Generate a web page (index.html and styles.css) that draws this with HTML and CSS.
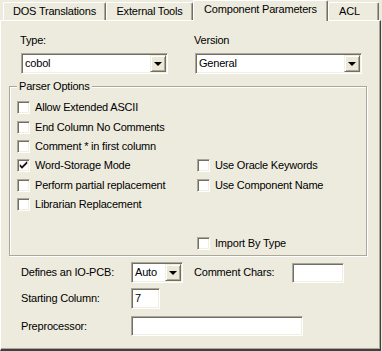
FILE: index.html
```html
<!DOCTYPE html>
<html lang="en">
<head>
    <meta charset="UTF-8">
    <title>Component Parameters</title>
    <link rel="stylesheet" href="styles.css">
</head>
<body>
    <div class="tabs">
        <div class="tab tab-dos">DOS Translations</div>
        <div class="tab tab-ext">External Tools</div>
        <div class="tab tab-comp active">Component Parameters</div>
        <div class="tab tab-acl">ACL</div>
    </div>

    <div class="pane">
        <!-- Type / Version -->
        <div class="top-row">
            <div class="field field-type">
                <div class="label">Type:</div>
                <div class="combo">
                    <span class="combo-text">cobol</span>
                    <span class="drop"><span class="arrow"></span></span>
                </div>
            </div>
            <div class="field field-version">
                <div class="label">Version</div>
                <div class="combo">
                    <span class="combo-text">General</span>
                    <span class="drop"><span class="arrow"></span></span>
                </div>
            </div>
        </div>

        <!-- Parser Options -->
        <fieldset class="group">
            <legend>Parser Options</legend>
            <div class="options">
                <div class="check" style="grid-area: 1 / 1"><span class="box"></span>Allow Extended ASCII</div>
                <div class="check" style="grid-area: 2 / 1"><span class="box"></span>End Column No Comments</div>
                <div class="check" style="grid-area: 3 / 1"><span class="box"></span>Comment * in first column</div>
                <div class="check" style="grid-area: 4 / 1">
                    <span class="box">
                        <svg width="11" height="11" viewBox="0 0 11 11"><path d="M2 4.5 L4 6.5 L9 1.5 L9 3.5 L4 8.5 L2 6.5 Z" fill="#000" stroke="#000" stroke-width="0.4"/></svg>
                    </span>Word-Storage Mode
                </div>
                <div class="check" style="grid-area: 5 / 1"><span class="box"></span>Perform partial replacement</div>
                <div class="check" style="grid-area: 6 / 1"><span class="box"></span>Librarian Replacement</div>
                <div class="check" style="grid-area: 4 / 2"><span class="box"></span>Use Oracle Keywords</div>
                <div class="check" style="grid-area: 5 / 2"><span class="box"></span>Use Component Name</div>
                <div class="check" style="grid-area: 8 / 2"><span class="box"></span>Import By Type</div>
            </div>
        </fieldset>

        <!-- Bottom fields -->
        <div class="bottom">
            <div class="row row-pcb">
                <div class="row-label">Defines an IO-PCB:</div>
                <div class="combo combo-auto">
                    <span class="combo-text">Auto</span>
                    <span class="drop"><span class="arrow"></span></span>
                </div>
                <div class="row-label comment-label">Comment Chars:</div>
                <div class="textbox tb-comment"></div>
            </div>
            <div class="row row-start">
                <div class="row-label">Starting Column:</div>
                <div class="textbox tb-start">7</div>
            </div>
            <div class="row row-pre">
                <div class="row-label">Preprocessor:</div>
                <div class="textbox tb-pre"></div>
            </div>
        </div>
    </div>
</body>
</html>
```

FILE: styles.css
```css
* {
    margin: 0;
    padding: 0;
    box-sizing: border-box;
}

body {
    width: 382px;
    height: 351px;
    overflow: hidden;
    background: #edebdd;
    font-family: 'Liberation Sans', Arial, sans-serif;
    font-size: 11px;
    line-height: 13px;
    letter-spacing: -0.2px;
    color: #000;
}

/* ---------- tabs ---------- */

.tabs {
    display: flex;
    align-items: flex-end;
    height: 20px;
    padding-left: 3px;
}

.tab {
    height: 18px;
    padding-top: 2px;
    text-align: center;
    white-space: nowrap;
    background: #edebdd;
    border-top: 1px solid #fff;
    border-left: 1px solid #fff;
    border-right: 1px solid #716f64;
    border-radius: 2px 2px 0 0;
    box-shadow: inset -1px 0 0 #aca899;
}

.tab-dos { width: 103px; }
.tab-ext { width: 87px; }
.tab-comp { width: 135px; }
.tab-acl {
    width: 51px;
    text-align: left;
    padding-left: 10px;
}

.tab.active {
    position: relative;
    z-index: 1;
    height: 21px;
    margin-bottom: -1px;
    padding-top: 2px;
}

/* ---------- pane ---------- */

.pane {
    height: 331px;
    width: 381px;
    border-top: 1px solid #fff;
    border-left: 1px solid #fff;
    border-right: 1px solid #404040;
    border-bottom: 2px solid #404040;
    box-shadow: inset -1px -1px 0 #aca899;
}

.top-row {
    display: flex;
    padding: 13px 0 0 19px;
}

.field-type { width: 148px; }
.field-version {
    width: 168px;
    margin-left: 26px;
}

.label {
    height: 13px;
    margin-bottom: 6px;
}

/* ---------- combo / textbox ---------- */

.combo,
.textbox {
    position: relative;
    display: flex;
    align-items: center;
    height: 21px;
    background: #fff;
    border-top: 1px solid #aca899;
    border-left: 1px solid #aca899;
    border-right: 1px solid #fff;
    border-bottom: 1px solid #fff;
    box-shadow: inset 1px 1px 0 #716f64, inset -1px -1px 0 #f1efe2;
}

.field .combo { margin-left: 1px; }

.combo-text,
.textbox {
    padding-left: 3px;
}

.combo-text { flex: 1; }

.drop {
    display: flex;
    align-items: center;
    justify-content: center;
    width: 16px;
    height: 17px;
    margin-right: 1px;
    background: #ece9d8;
    border-top: 1px solid #f1efe2;
    border-left: 1px solid #f1efe2;
    border-right: 1px solid #716f64;
    border-bottom: 1px solid #716f64;
    box-shadow: inset 1px 1px 0 #fff, inset -1px -1px 0 #aca899;
}

.arrow {
    width: 0;
    height: 0;
    border-left: 4px solid transparent;
    border-right: 4px solid transparent;
    border-top: 4px solid #000;
    margin-top: 1px;
}

/* ---------- group box ---------- */

.group {
    margin: 6px 13px 0 8px;
    padding: 5px 0 3px 7px;
    border: 1px solid #aca899;
    box-shadow: inset 1px 1px 0 #fff, 1px 1px 0 #fff;
    height: 176px;
}

.group legend {
    padding: 0 2px 0 2px;
    margin-left: 0;
    background: #edebdd;
    line-height: 13px;
}

.options {
    display: grid;
    grid-template-columns: 180px 1fr;
    grid-template-rows: repeat(8, 19.4px);
}

.check {
    display: flex;
    align-items: center;
    white-space: nowrap;
}

.box {
    display: flex;
    align-items: center;
    justify-content: center;
    width: 13px;
    height: 13px;
    margin-right: 5px;
    background: #fff;
    border-top: 1px solid #aca899;
    border-left: 1px solid #aca899;
    border-right: 1px solid #fff;
    border-bottom: 1px solid #fff;
    box-shadow: inset 1px 1px 0 #716f64, inset -1px -1px 0 #f1efe2;
}

/* ---------- bottom rows ---------- */

.bottom {
    padding: 6px 0 0 20px;
}

.row {
    display: flex;
    align-items: center;
}

.row-start { margin-top: 5px; }
.row-pre { margin-top: 7px; }

.row-label {
    width: 110px;
    white-space: nowrap;
}

.combo-auto { width: 52px; }

.comment-label {
    width: 98px;
    margin-left: 11px;
}

.textbox { height: 20px; }
.tb-comment { width: 52px; }
.tb-start { width: 29px; height: 21px; }
.tb-pre { width: 172px; }
```
